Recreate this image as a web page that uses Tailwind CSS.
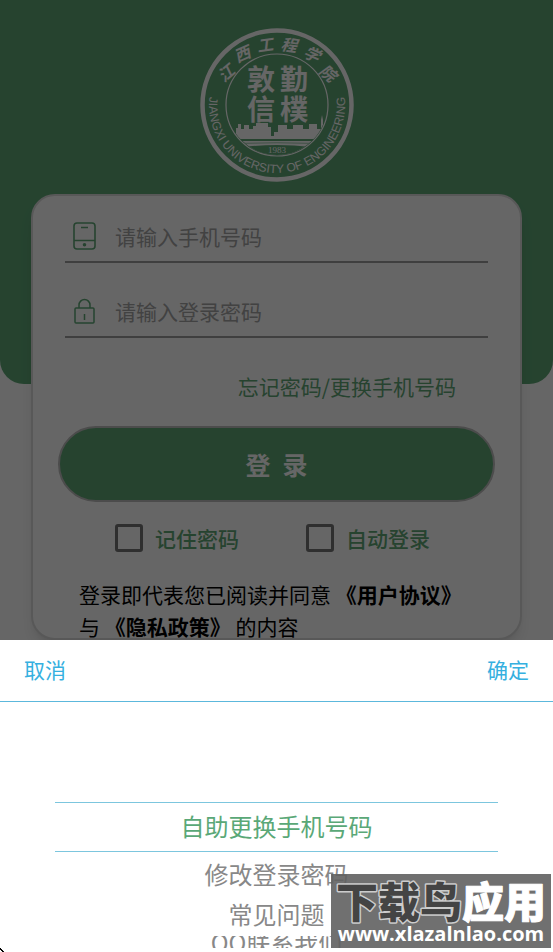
<!DOCTYPE html>
<html lang="zh-CN">
<head>
    <meta charset="UTF-8">
    <meta name="viewport" content="width=device-width, initial-scale=1.0">
    <title>登录</title>
    <script src="https://cdn.jsdelivr.net/npm/@tailwindcss/browser@4"></script>
</head>
<body class="font-['Noto_Sans_CJK_SC',sans-serif] text-[21px] leading-8">
    <div class="relative h-screen overflow-hidden bg-white">
        <!-- Green backdrop -->
        <div class="absolute inset-x-0 top-0 h-96 rounded-b-3xl bg-[#5fa877]"></div>

        <!-- Login page -->
        <main class="relative px-[31px] pt-7">
            <!-- School emblem -->
            <svg class="mx-auto size-[154px]" viewBox="-77 -77 154 154" fill="#fff" role="img" aria-label="江西工程学院">
                <defs>
                    <path id="ring" d="M-64.200 -22.400A68 68 0 1 0 64.200 -22.400"/>
                    <clipPath id="inner"><circle r="50"/></clipPath>
                </defs>
                <circle r="74.500" fill="none" stroke="#fff" stroke-width="4.500"/>
                <circle r="51" fill="none" stroke="#fff" stroke-width="1.200"/>
                <g font-size="16" font-weight="700" font-style="italic" text-anchor="middle">
                    <text transform="translate(-51 -32) rotate(-40)" y="6">江</text>
                    <text transform="translate(-35 -51) rotate(-24)" y="6">西</text>
                    <text transform="translate(-12 -60) rotate(-8)" y="6">工</text>
                    <text transform="translate(12 -60) rotate(8)" y="6">程</text>
                    <text transform="translate(35 -51) rotate(24)" y="6">学</text>
                    <text transform="translate(51 -32) rotate(40)" y="6">院</text>
                </g>
                <text font-family="Liberation Sans, sans-serif" font-size="12" text-anchor="middle"><textPath href="#ring" startOffset="50%">JIANGXI UNIVERSITY OF ENGINEERING</textPath></text>
                <g font-size="28" font-weight="700" text-anchor="middle">
                    <text x="-16" y="-15">敦</text>
                    <text x="17" y="-15">勤</text>
                    <text x="-16" y="15">信</text>
                    <text x="17" y="15">樸</text>
                </g>
                <g clip-path="url(#inner)">
                    <path d="M-42 34V28h1v-5h2v-4h3v5h3v-4h5v4h4v-3h3v-3h12v4h3v9h3v-4h4v-7h9v4h6v-4h10v4h6v-5h8v5h4V15l1-5 1 5v9h5v2h3v6h3v2z"/>
                    <path d="M-46 36H46V52H-46z"/>
                    <path d="M-34 42Q0 38 34 42L24 48Q0 53 -24 48z" fill="#5fa877"/>
                    <path d="M-42 38.500Q0 37 42 38.500" fill="none" stroke="#5fa877" stroke-width=".6"/>
                </g>
                <text y="48" font-family="Liberation Serif, serif" font-size="9" text-anchor="middle">1983</text>
            </svg>

            <form class="mt-3 rounded-[24px] border-2 border-[#dcdcdc] bg-white px-8 shadow-lg">
                <label class="flex h-[67px] items-center border-b-2 border-[#9e9e9e] pt-[18px] pb-1">
                    <svg class="mx-2 h-7 w-6" viewBox="0 0 24 28" fill="none" stroke="#5fa877" stroke-width="1.600" aria-hidden="true">
                        <rect x="1" y="1" width="21" height="26" rx="3"/>
                        <path d="M1 18.500h21M8 5.500h7"/>
                        <circle cx="11.500" cy="22.800" r="1" fill="#5fa877"/>
                    </svg>
                    <input type="tel" aria-label="手机号码" placeholder="请输入手机号码" class="ml-[10px] min-w-0 flex-1 outline-none placeholder:text-[#a5a5a5]">
                </label>
                <label class="flex h-[75px] items-center border-b-2 border-[#9e9e9e] pt-[26px] pb-1">
                    <svg class="mx-2 h-7 w-6" viewBox="0 0 24 28" fill="none" stroke="#5fa877" stroke-width="1.500" aria-hidden="true">
                        <rect x="2" y="11" width="19" height="15" rx="1"/>
                        <path d="M6 11V8a5.500 5.500 0 0 1 11 0v3M11.500 17v6"/>
                    </svg>
                    <input type="password" aria-label="登录密码" placeholder="请输入登录密码" class="ml-[10px] min-w-0 flex-1 outline-none placeholder:text-[#a5a5a5]">
                </label>
                <div class="mt-8 mr-8 text-right">
                    <a href="#" class="text-[#5fa877]">忘记密码/更换手机号码</a>
                </div>
                <button type="button" class="-mx-[7px] mt-6 flex h-[76px] w-[calc(100%+14px)] items-center justify-center gap-3 rounded-full border-2 border-[#bdbdbd] bg-[#5fa877] text-[25px] font-bold text-white"><span>登</span><span>录</span></button>
                <div class="mt-5 flex gap-[67px] pl-[50px] font-medium text-[#5fa877]">
                    <label class="flex items-center gap-3 whitespace-nowrap">
                        <input type="checkbox" class="size-7 appearance-none rounded-[3px] border-3 border-[#757575]">记住密码
                    </label>
                    <label class="flex items-center gap-3 whitespace-nowrap">
                        <input type="checkbox" class="size-7 appearance-none rounded-[3px] border-3 border-[#757575]">自动登录
                    </label>
                </div>
                <p class="mx-[14px] mt-6 -mb-1 text-black">
                    登录即代表您已阅读并同意 <a href="#" class="font-bold">《用户协议》</a><br>
                    与 <a href="#" class="font-bold">《隐私政策》</a> 的内容
                </p>
            </form>
        </main>

        <div class="absolute inset-0 bg-black/60"></div>

        <!-- Bottom sheet picker -->
        <section class="absolute inset-x-0 bottom-0 h-[312px] overflow-hidden bg-white">
            <div class="flex h-[62px] items-center justify-between border-b border-[#5cb8dc] px-6 pb-1 text-[#35b0e0]">
                <button type="button">取消</button>
                <button type="button">确定</button>
            </div>
            <ul class="mx-[55px] mt-[100px] text-center text-2xl text-[#888]">
                <li class="flex h-[50px] items-center justify-center border-y border-[#7cc6de] pb-[2px] text-[#5aa877]">自助更换手机号码</li>
                <li class="h-11 leading-[44px]">修改登录密码</li>
                <li class="h-9 leading-9">常见问题</li>
                <li class="mt-1 h-3 overflow-hidden leading-3">QQ联系我们</li>
            </ul>
        </section>

        <!-- Corner mark -->
        <svg class="absolute bottom-0 left-0 size-1" viewBox="0 0 4 4" aria-hidden="true"><path d="M0 0h1v1h1v1h1v1h1v1H2V3H1V2H0z"/></svg>

        <!-- Site badge -->
        <aside class="absolute right-[2px] bottom-1 h-[74px] w-[220px] overflow-hidden bg-[#606060]/90">
            <svg class="size-full" viewBox="0 0 220 74" fill="#fff" text-anchor="middle">
                <text x="110" y="44" font-size="42" font-weight="900" stroke-width="3" stroke-linejoin="round" paint-order="stroke"><tspan fill="#444" stroke="#ccc">下载鸟</tspan><tspan stroke="#fff" stroke-width="1">应用</tspan></text>
                <text x="110" y="67" font-family="Open Sans, sans-serif" font-size="20" font-weight="700">www.xlazalnlao.com</text>
            </svg>
        </aside>
    </div>
</body>
</html>
